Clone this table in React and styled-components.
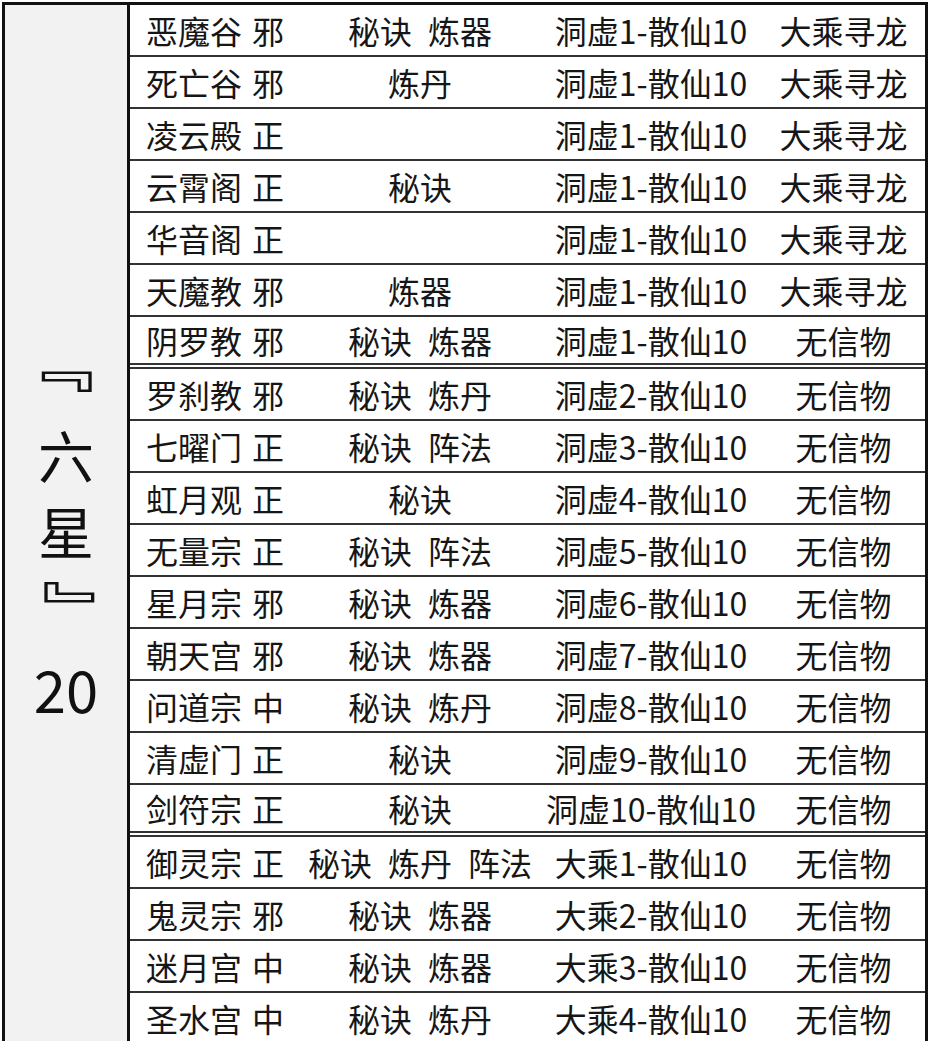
import React from "react";
import styled, { createGlobalStyle } from "styled-components";

const GlobalStyle = createGlobalStyle`
  html, body {
    margin: 0;
    padding: 0;
    background: #ffffff;
    overflow: hidden;
  }
  body {
    font-family: "Noto Sans CJK SC", "Noto Sans", sans-serif;
    color: #161616;
  }
`;

const rows = [
  { name: "恶魔谷", side: "邪", skills: ["秘诀", "炼器"], level: "洞虚1-散仙10", token: "大乘寻龙" },
  { name: "死亡谷", side: "邪", skills: ["炼丹"], level: "洞虚1-散仙10", token: "大乘寻龙" },
  { name: "凌云殿", side: "正", skills: [], level: "洞虚1-散仙10", token: "大乘寻龙" },
  { name: "云霄阁", side: "正", skills: ["秘诀"], level: "洞虚1-散仙10", token: "大乘寻龙" },
  { name: "华音阁", side: "正", skills: [], level: "洞虚1-散仙10", token: "大乘寻龙" },
  { name: "天魔教", side: "邪", skills: ["炼器"], level: "洞虚1-散仙10", token: "大乘寻龙" },
  { name: "阴罗教", side: "邪", skills: ["秘诀", "炼器"], level: "洞虚1-散仙10", token: "无信物", double: true },
  { name: "罗刹教", side: "邪", skills: ["秘诀", "炼丹"], level: "洞虚2-散仙10", token: "无信物" },
  { name: "七曜门", side: "正", skills: ["秘诀", "阵法"], level: "洞虚3-散仙10", token: "无信物" },
  { name: "虹月观", side: "正", skills: ["秘诀"], level: "洞虚4-散仙10", token: "无信物" },
  { name: "无量宗", side: "正", skills: ["秘诀", "阵法"], level: "洞虚5-散仙10", token: "无信物" },
  { name: "星月宗", side: "邪", skills: ["秘诀", "炼器"], level: "洞虚6-散仙10", token: "无信物" },
  { name: "朝天宫", side: "邪", skills: ["秘诀", "炼器"], level: "洞虚7-散仙10", token: "无信物" },
  { name: "问道宗", side: "中", skills: ["秘诀", "炼丹"], level: "洞虚8-散仙10", token: "无信物" },
  { name: "清虚门", side: "正", skills: ["秘诀"], level: "洞虚9-散仙10", token: "无信物" },
  { name: "剑符宗", side: "正", skills: ["秘诀"], level: "洞虚10-散仙10", token: "无信物", double: true },
  { name: "御灵宗", side: "正", skills: ["秘诀", "炼丹", "阵法"], level: "大乘1-散仙10", token: "无信物" },
  { name: "鬼灵宗", side: "邪", skills: ["秘诀", "炼器"], level: "大乘2-散仙10", token: "无信物" },
  { name: "迷月宫", side: "中", skills: ["秘诀", "炼器"], level: "大乘3-散仙10", token: "无信物" },
  { name: "圣水宫", side: "中", skills: ["秘诀", "炼丹"], level: "大乘4-散仙10", token: "无信物" },
];

const App = () => {
  return (
    <>
      <GlobalStyle />
      <Sheet>
        <GroupCell>
          <GroupLabel>
            <Bracket dx={-10} dy={-16}>﹃</Bracket>
            <Glyph>六</Glyph>
            <Glyph>星</Glyph>
            <Bracket dx={14} dy={0}>﹄</Bracket>
            <Count>20</Count>
          </GroupLabel>
        </GroupCell>
        <RowList>
          {rows.map((r) => (
            <Row key={r.name} double={r.double ? 1 : 0}>
              <NameCell>
                {r.name}
                <Side>{r.side}</Side>
              </NameCell>
              <SkillCell>
                {r.skills.map((s) => (
                  <span key={s}>{s}</span>
                ))}
              </SkillCell>
              <CenterCell>{r.level}</CenterCell>
              <CenterCell>{r.token}</CenterCell>
            </Row>
          ))}
        </RowList>
      </Sheet>
    </>
  );
};

const Sheet = styled.div`
  display: flex;
  width: 926px;
  margin: 2px 0 0 2px;
  border: 3px solid #111111;
  border-bottom: none;
  box-sizing: border-box;
`;

const GroupCell = styled.div`
  width: 122px;
  flex-shrink: 0;
  background: #f2f2f2;
  border-right: 3px solid #111111;
  display: flex;
  align-items: center;
  justify-content: center;
  padding-top: 14px;
`;

const GroupLabel = styled.div`
  display: flex;
  flex-direction: column;
  align-items: center;
  font-size: 56px;
  line-height: 76px;
  color: #111111;
`;

const Glyph = styled.span`
  display: block;
`;

const Bracket = styled.span`
  display: block;
  font-weight: 700;
  transform: translate(${({ dx }) => dx}px, ${({ dy }) => dy}px) scaleX(1.35);
`;

const Count = styled.span`
  display: block;
  font-size: 58px;
  line-height: 72px;
  margin-top: 8px;
`;

const RowList = styled.div`
  flex: 1;
  display: flex;
  flex-direction: column;
`;

const Row = styled.div`
  display: grid;
  grid-template-columns: 170px 240px 222px 1fr;
  align-items: center;
  height: 52px;
  box-sizing: border-box;
  border-bottom: ${({ double }) => (double ? "6px double #333333" : "2px solid #333333")};
  font-size: 32px;
  line-height: 1;
  white-space: nowrap;
`;

const NameCell = styled.div`
  padding-left: 16px;
`;

const Side = styled.span`
  margin-left: 10px;
`;

const SkillCell = styled.div`
  display: flex;
  justify-content: center;
  gap: 16px;
`;

const CenterCell = styled.div`
  text-align: center;
`;

export default App;
